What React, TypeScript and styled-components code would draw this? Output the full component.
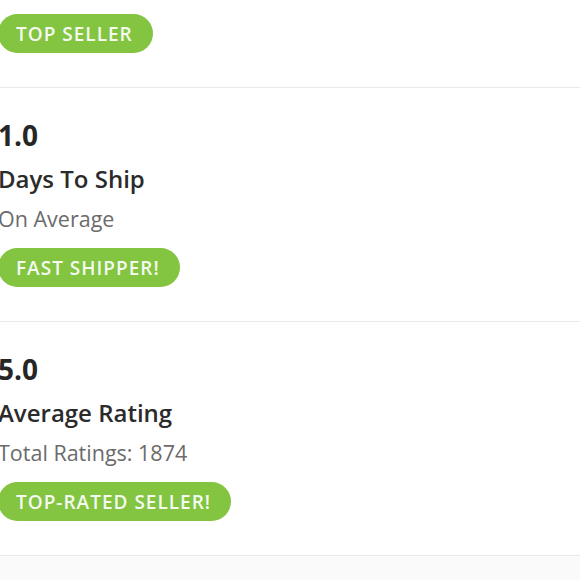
import React from "react";
import styled, { createGlobalStyle } from "styled-components";

const Global = createGlobalStyle`
  html, body { margin: 0; padding: 0; background: #fafafa; }
  body { font-family: "Open Sans", Lato, sans-serif; overflow: hidden; }
`;

const Page = styled.div`
  width: 580px;
  background: #ffffff;
`;

const Section = styled.section<{ $first?: boolean }>`
  display: flex;
  flex-direction: column;
  align-items: flex-start;
  padding: ${(p) => (p.$first ? "14px" : "30px")} 0 34px 0;
  margin-left: -2px;
  border-bottom: 1px solid #e9e9e9;
`;

const Value = styled.div`
  font-size: 28px;
  font-weight: 700;
  color: #262626;
  line-height: 34px;
`;

const Label = styled.div`
  font-size: 24px;
  font-weight: 600;
  color: #2b2b2b;
  line-height: 30px;
  margin-top: 12px;
`;

const Sub = styled.div`
  font-size: 21.5px;
  font-weight: 400;
  color: #6b6b6b;
  line-height: 26px;
  margin-top: 12px;
`;

const Badge = styled.span<{ $top?: number }>`
  display: inline-flex;
  align-items: center;
  height: 39px;
  padding: 0 20px 0 18px;
  margin-top: ${(p) => p.$top ?? 0}px;
  border-radius: 20px;
  background: #83c441;
  color: #f4faf0;
  font-size: 19px;
  font-weight: 600;
  letter-spacing: 1px;
  white-space: nowrap;
`;

const Footer = styled.div`
  height: 30px;
  background: #fafafa;
`;

export default function App() {
  return (
    <Page>
      <Global />
      <Section $first>
        <Badge>TOP SELLER</Badge>
      </Section>
      <Section>
        <Value>1.0</Value>
        <Label>Days To Ship</Label>
        <Sub>On Average</Sub>
        <Badge $top={16}>FAST SHIPPER!</Badge>
      </Section>
      <Section>
        <Value>5.0</Value>
        <Label>Average Rating</Label>
        <Sub>Total Ratings: 1874</Sub>
        <Badge $top={16}>TOP-RATED SELLER!</Badge>
      </Section>
      <Footer />
    </Page>
  );
}
